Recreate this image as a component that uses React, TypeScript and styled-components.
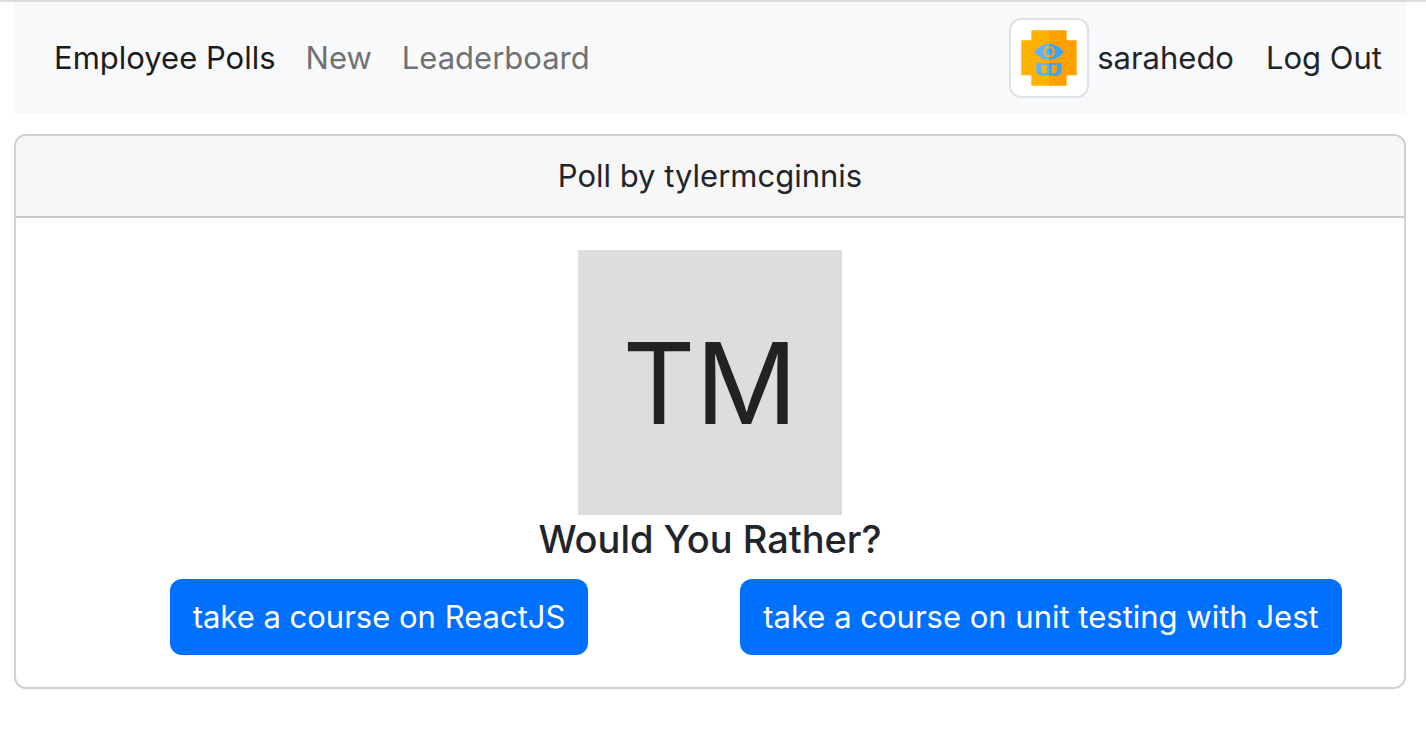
import React from "react";
import styled, { createGlobalStyle } from "styled-components";

const GlobalStyle = createGlobalStyle`
  *, *::before, *::after { box-sizing: border-box; }
  body {
    margin: 0;
    background: #fff;
    color: #212529;
    font-family: Inter, "Liberation Sans", sans-serif;
    font-size: 31px;
    line-height: 48px;
  }
`;

const Page = styled.div`
  border-top: 2px solid #dcdcdd;
  padding: 0 20px 32px 14px;
`;

const Navbar = styled.nav`
  display: flex;
  align-items: center;
  justify-content: space-between;
  flex-wrap: wrap;
  padding: 16px 24px;
  margin-bottom: 20px;
  background: #f8f9fb;
`;

const NavLinks = styled.div`
  display: flex;
  gap: 30px;
  padding-left: 16px;
`;

const NavLink = styled.a<{ $active?: boolean }>`
  color: ${({ $active }) => ($active ? "#1a1b1c" : "#707172")};
  text-decoration: none;
`;

const Account = styled.div`
  display: flex;
  align-items: center;
  gap: 32px;
`;

const User = styled.div`
  display: flex;
  align-items: center;
  gap: 8px;
`;

const Thumbnail = styled.span`
  display: flex;
  width: 80px;
  height: 80px;
  padding: 8px;
  border: 2px solid #dee2e6;
  border-radius: 12px;
  background: #fff;
`;

const LogOut = styled.button`
  padding: 0;
  border: 0;
  background: none;
  color: inherit;
  font: inherit;
  cursor: pointer;
`;

const Card = styled.main`
  border: 2px solid #d0d0d0;
  border-radius: 12px;
  overflow: hidden;
  text-align: center;
`;

const CardHeader = styled.header`
  padding: 16px 32px;
  border-bottom: 2px solid #cacaca;
  background: #f7f7f7;
`;

const CardBody = styled.div`
  display: flex;
  flex-direction: column;
  align-items: center;
  padding: 32px;
`;

const Initials = styled.div`
  display: flex;
  align-items: center;
  justify-content: center;
  width: 264px;
  height: 265px;
  background: #ddd;
  color: #222;
  font-size: 113px;
`;

const Question = styled.h1`
  margin: 0 0 16px;
  font-size: 38px;
  line-height: 48px;
  font-weight: 500;
`;

const Options = styled.div`
  display: grid;
  grid-template-columns: 1fr 1fr;
  justify-items: center;
  width: 100%;
`;

const OptionButton = styled.button`
  padding: 14px 23px;
  border: 0;
  border-radius: 12px;
  background: #0070ff;
  color: #fff;
  font: inherit;
  cursor: pointer;
`;

const RobotAvatar = () => (
  <svg viewBox="0 0 180 180" width="100%" height="100%" role="img" aria-label="sarahedo avatar">
    <path fill="#ffb300" d="M37 7H91V173H37V142H7V37H37Z" />
    <path fill="#ffa000" d="M90 7H143V37H173V142H143V173H90Z" />
    <path fill="#5db3ff" d="M91 47C70 47 55 60 46 71C55 83 70 95 91 95Z" />
    <path fill="#38a4ff" d="M90 47C110 47 125 60 134 71C125 83 110 95 90 95Z" />
    <path fill="#ffb300" d="M91 53A18 18 0 0 0 91 89Z" />
    <path fill="#ffa000" d="M90 53A18 18 0 0 1 90 89Z" />
    <path fill="#5db3ff" d="M91 60A11 11 0 0 0 91 82Z" />
    <path fill="#38a4ff" d="M90 60A11 11 0 0 1 90 82Z" />
    <path fill="#5db3ff" d="M91 105H52V129Q54 141 66 143H91Z" />
    <path fill="#38a4ff" d="M90 105H128V129Q126 141 114 143H90Z" />
    <path fill="#ffb300" d="M67 112H83V136H77Q67 135 67 127Z" />
    <path fill="#ffa000" d="M98 112H114V127Q114 135 104 136H98Z" />
  </svg>
);

const navItems = [
  { label: "Employee Polls", href: "#home", active: true },
  { label: "New", href: "#new" },
  { label: "Leaderboard", href: "#leaderboard" },
];

const options = ["take a course on ReactJS", "take a course on unit testing with Jest"];

export default function App() {
  return (
    <>
      <GlobalStyle />
      <Page>
        <Navbar>
          <NavLinks>
            {navItems.map(({ label, href, active }) => (
              <NavLink key={href} href={href} $active={active}>
                {label}
              </NavLink>
            ))}
          </NavLinks>
          <Account>
            <User>
              <Thumbnail>
                <RobotAvatar />
              </Thumbnail>
              <span>sarahedo</span>
            </User>
            <LogOut type="button">Log Out</LogOut>
          </Account>
        </Navbar>
        <Card>
          <CardHeader>Poll by tylermcginnis</CardHeader>
          <CardBody>
            <Initials>TM</Initials>
            <Question>Would You Rather?</Question>
            <Options>
              {options.map((option) => (
                <OptionButton key={option} type="button">
                  {option}
                </OptionButton>
              ))}
            </Options>
          </CardBody>
        </Card>
      </Page>
    </>
  );
}
